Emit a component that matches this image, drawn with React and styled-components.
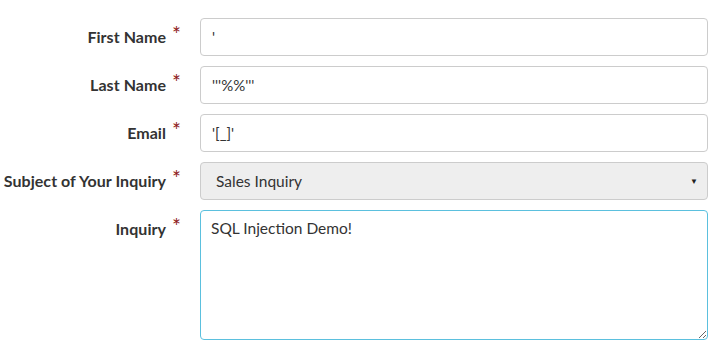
import React from 'react';
import styled, { createGlobalStyle } from 'styled-components';

const Global = createGlobalStyle`
    body{
        margin: 0;
        background: #fff;
        font-family: Lato, "Open Sans", sans-serif;
    }
`

export default function App() {
    const fields = [
        { label: 'First Name', value: "'" },
        { label: 'Last Name', value: "'''%%'''" },
        { label: 'Email', value: "'[_]'" },
    ];
    return (
        <>
            <Global />
            <Form>
                {fields.map((f) => (
                    <React.Fragment key={f.label}>
                        <Label>
                            {f.label}<Req>*</Req>
                        </Label>
                        <Input defaultValue={f.value} />
                    </React.Fragment>
                ))}
                <Label>
                    Subject of Your Inquiry<Req>*</Req>
                </Label>
                <SelectBox>
                    <span>Sales Inquiry</span>
                    <Arrow>▼</Arrow>
                </SelectBox>
                <Label>
                    Inquiry<Req>*</Req>
                </Label>
                <TextArea defaultValue="SQL Injection Demo!" />
            </Form>
        </>
    )
}

const Form = styled.form`
    display: grid;
    grid-template-columns: 200px 508px;
    row-gap: 10px;
    padding-top: 18px;
`
const Label = styled.label`
    display: flex;
    justify-content: flex-end;
    align-items: center;
    height: 36px;
    padding-right: 19px;
    font-size: 16px;
    font-weight: 700;
    letter-spacing: 0.05px;
    color: #333;
    white-space: nowrap;
`
const Req = styled.span`
    color: #8e1b1b;
    font-weight: 400;
    font-size: 21px;
    margin-left: 6px;
    position: relative;
    top: -3px;
`
const Input = styled.input`
    box-sizing: border-box;
    height: 38px;
    width: 100%;
    border: 1px solid #ccc;
    border-radius: 4px;
    padding: 0 11px;
    font-family: Lato, "Open Sans", sans-serif;
    font-size: 15px;
    color: #333;
    outline: none;
`
const SelectBox = styled.div`
    box-sizing: border-box;
    height: 38px;
    display: flex;
    align-items: center;
    justify-content: space-between;
    background: #eee;
    border: 1px solid #ccc;
    border-radius: 4px;
    padding: 0 9px 0 15px;
    font-size: 15.5px;
    color: #333;
`
const Arrow = styled.span`
    font-size: 8px;
    color: #222;
`
const TextArea = styled.textarea`
    box-sizing: border-box;
    height: 130px;
    width: 100%;
    border: 1px solid #5bc0de;
    border-radius: 4px;
    padding: 8px 10px;
    font-family: Lato, "Open Sans", sans-serif;
    font-size: 15.5px;
    color: #333;
    outline: none;
    resize: vertical;
`
